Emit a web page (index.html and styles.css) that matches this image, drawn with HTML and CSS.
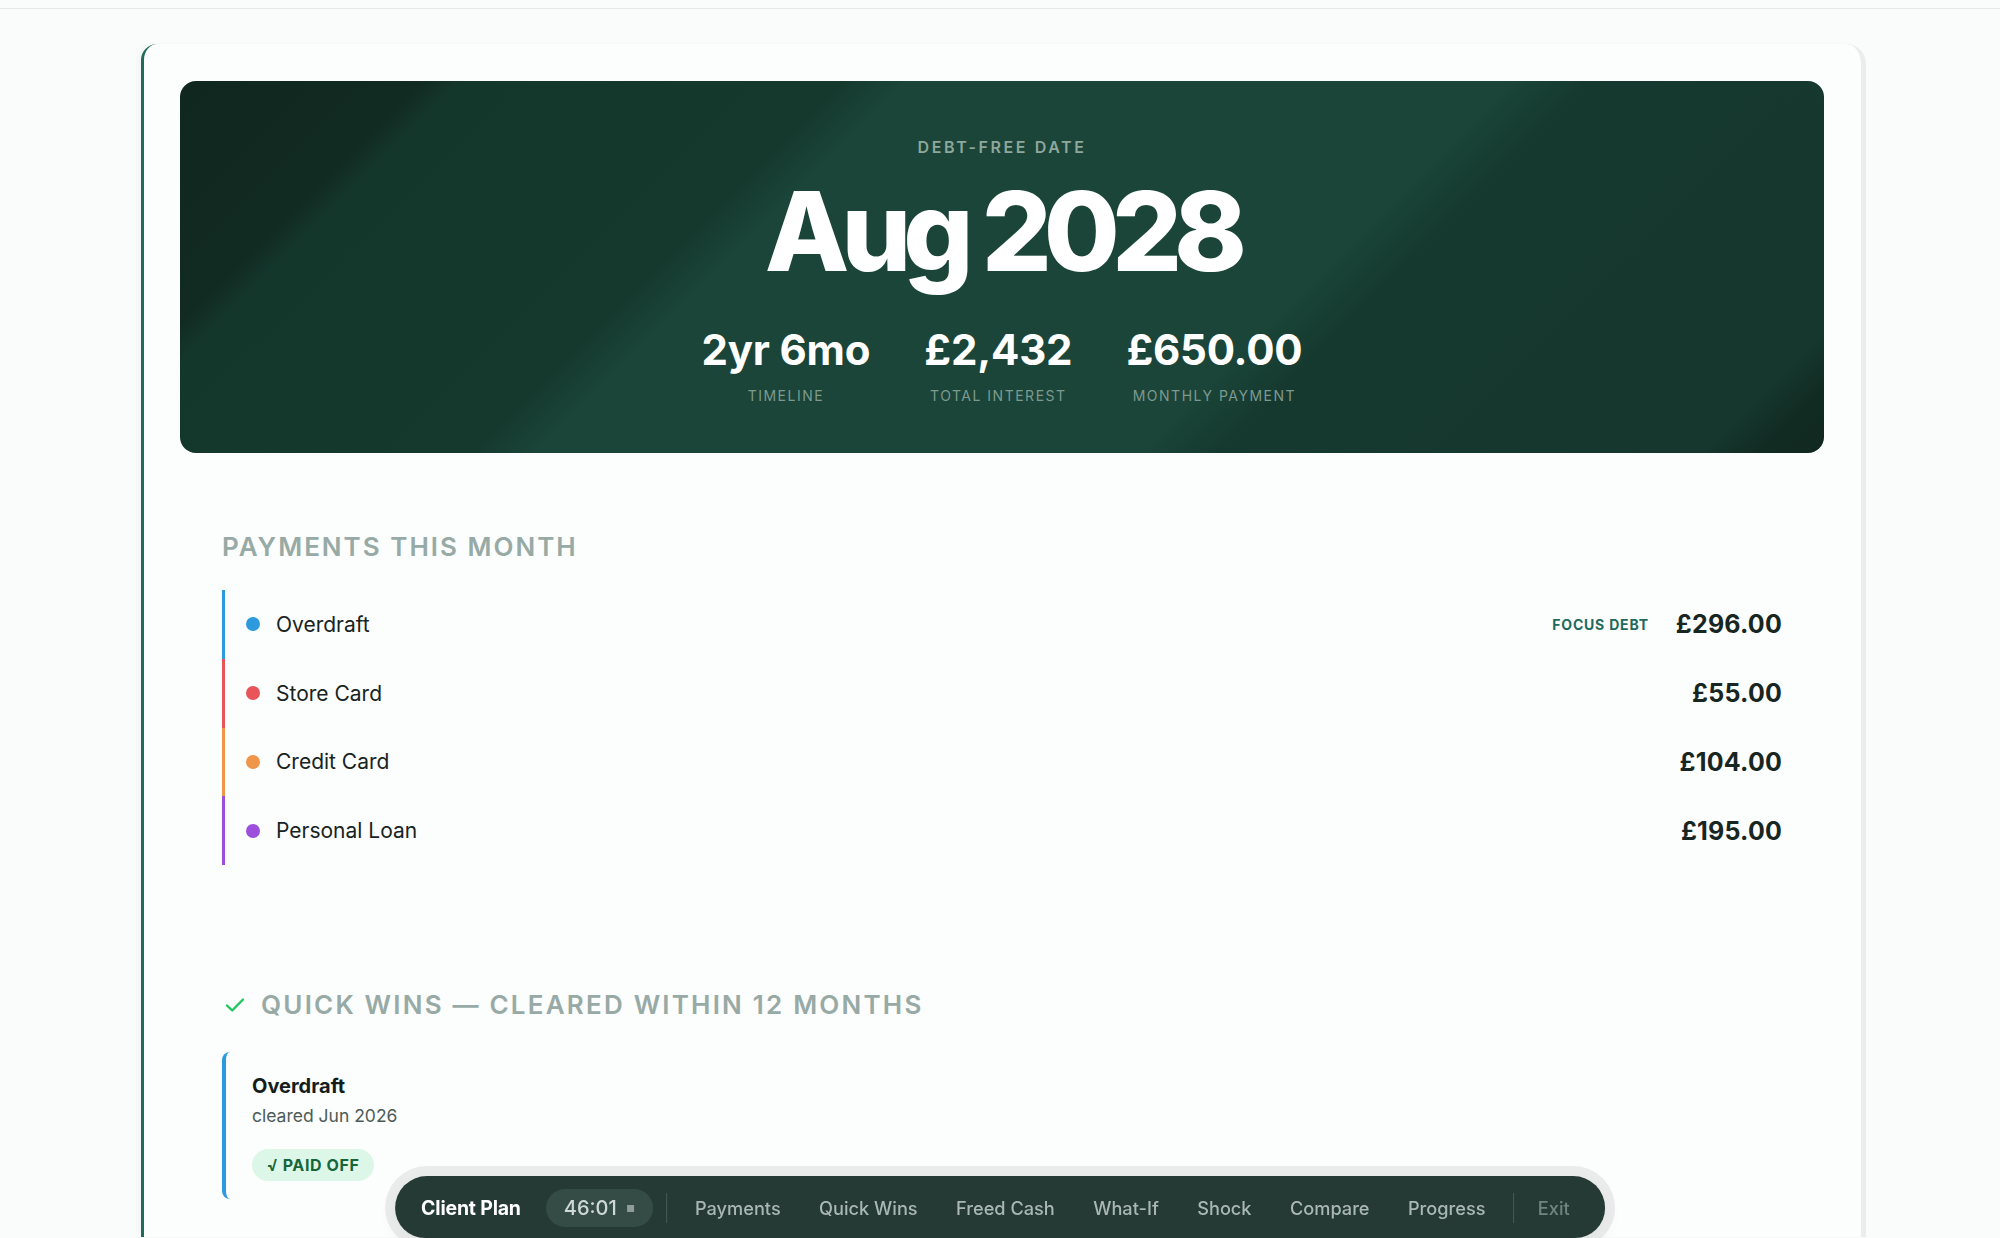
FILE: index.html
```html
<!DOCTYPE html>
<html lang="en">
<head>
<meta charset="utf-8">
<title>Client Plan</title>
<link rel="stylesheet" href="styles.css">
</head>
<body>
<div class="topbar"></div>
<main class="sheet">
  <section class="hero">
    <div class="hero-label">DEBT-FREE DATE</div>
    <div class="hero-date">Aug 2028</div>
    <div class="stats">
      <div class="stat"><div class="stat-value">2yr 6mo</div><div class="stat-label">TIMELINE</div></div>
      <div class="stat"><div class="stat-value">£2,432</div><div class="stat-label">TOTAL INTEREST</div></div>
      <div class="stat"><div class="stat-value">£650.00</div><div class="stat-label">MONTHLY PAYMENT</div></div>
    </div>
  </section>

  <section class="block payments">
    <h2 class="block-title">PAYMENTS THIS MONTH</h2>
    <div class="rows">
      <div class="row row-blue"><span class="dot dot-blue"></span><span class="row-name">Overdraft</span><span class="focus">FOCUS DEBT</span><span class="amount">£296.00</span></div>
      <div class="row row-red"><span class="dot dot-red"></span><span class="row-name">Store Card</span><span class="amount">£55.00</span></div>
      <div class="row row-orange"><span class="dot dot-orange"></span><span class="row-name">Credit Card</span><span class="amount">£104.00</span></div>
      <div class="row row-purple"><span class="dot dot-purple"></span><span class="row-name">Personal Loan</span><span class="amount">£195.00</span></div>
    </div>
  </section>

  <section class="block wins">
    <h2 class="block-title wins-title">
      <svg class="check" viewBox="0 0 20 16" width="20" height="16" aria-hidden="true"><path d="M2 8.5 L7.2 13.5 L18 2.5" fill="none" stroke="#22c55e" stroke-width="2.4" stroke-linecap="round" stroke-linejoin="round"/></svg>
      <span>QUICK WINS — CLEARED WITHIN 12 MONTHS</span>
    </h2>
    <div class="win-card">
      <div class="win-name">Overdraft</div>
      <div class="win-date">cleared Jun 2026</div>
      <span class="badge">√ PAID OFF</span>
    </div>
  </section>
</main>

<nav class="dock">
  <span class="dock-brand">Client Plan</span>
  <span class="timer">46:01 <span class="stop"></span></span>
  <span class="sep sep-left"></span>
  <a class="dock-link">Payments</a>
  <a class="dock-link">Quick Wins</a>
  <a class="dock-link">Freed Cash</a>
  <a class="dock-link">What-If</a>
  <a class="dock-link">Shock</a>
  <a class="dock-link">Compare</a>
  <a class="dock-link">Progress</a>
  <span class="sep sep-right"></span>
  <a class="dock-link exit">Exit</a>
</nav>
</body>
</html>
```

FILE: styles.css
```css
* { box-sizing: border-box; }
html, body { margin: 0; padding: 0; }
body {
  background: #fafbfb;
  font-family: Inter, "Noto Sans", "Liberation Sans", sans-serif;
  color: #17231f;
  height: 1238px;
  overflow: hidden;
}
.topbar {
  height: 9px;
  border-bottom: 1px solid #e6e9e8;
}
.sheet {
  margin: 35px 0 0 141px;
  width: 1725px;
  height: 1193px;
  background: #fcfdfd;
  border-left: 3px solid #1f6b5c;
  border-right: 5px solid #ebeded;
  border-radius: 16px 20px 0 0;
  padding: 37px 37px 0 36px;
  box-shadow: -4px 0 5px rgba(0,0,0,0.025);
  overflow: hidden;
}
.hero {
  height: 372px;
  border-radius: 16px;
  padding-top: 56px;
  background: linear-gradient(135deg, #10271f 0%, #112a22 12%, #14372c 14%, #16392e 33%, #1a4538 36%, #1a4538 66%, #16392f 70%, #15372d 94%, #112a22 97%, #102820 100%);
  text-align: center;
  color: #fff;
}
.hero-label {
  font-size: 16px;
  font-weight: 600;
  letter-spacing: 2.6px;
  color: #8fa79c;
  line-height: 18px;
  margin-top: 1px;
}
.hero-date {
  margin-top: 20px;
  font-size: 110px;
  line-height: 110px;
  font-weight: 800;
  letter-spacing: -8px;
}
.stats {
  margin-top: 41px;
  display: flex;
  justify-content: center;
  gap: 54px;
}
.stat { display: flex; flex-direction: column; align-items: center; }
.stat-value {
  font-size: 42px;
  line-height: 45px;
  font-weight: 700;
  letter-spacing: -0.2px;
}
.stat-label {
  margin-top: 15px;
  font-size: 14px;
  line-height: 17px;
  letter-spacing: 1.5px;
  color: #7e998f;
}

.block { margin: 0 42px; }
.payments { padding-top: 78px; }
.block-title {
  margin: 0 0 27px;
  font-size: 26px;
  line-height: 32px;
  font-weight: 600;
  letter-spacing: 2px;
  color: #97aaa5;
}
.rows { display: flex; flex-direction: column; }
.row {
  height: 68.75px;
  display: flex;
  align-items: center;
  border-left: 3px solid;
  padding-left: 21px;
}
.row-blue { border-color: #2d9ade; }
.row-red { border-color: #e8545a; }
.row-orange { border-color: #f0964a; }
.row-purple { border-color: #9b4fdc; }
.dot { width: 14px; height: 14px; border-radius: 50%; flex: none; }
.dot-blue { background: #2d9ade; }
.dot-red { background: #e8545a; }
.dot-orange { background: #f0964a; }
.dot-purple { background: #9b4fdc; }
.row-name {
  margin-left: 16px;
  font-size: 21px;
  color: #17231f;
  flex: 1;
}
.focus {
  font-size: 14px;
  font-weight: 700;
  letter-spacing: 0.8px;
  color: #1e6b5c;
  margin-right: 27px;
}
.amount {
  font-size: 25px;
  font-weight: 700;
  letter-spacing: 0.2px;
  color: #182622;
}

.wins { padding-top: 124px; }
.wins-title {
  display: flex;
  align-items: center;
  margin-bottom: 31px;
  margin-left: 3px;
  letter-spacing: 2.2px;
}
.check { margin-right: 16px; flex: none; }
.win-card {
  height: 147px;
  border-left: 4px solid #2d9ade;
  border-radius: 8px 0 0 8px;
  padding: 22px 24px 0 26px;
}
.win-name {
  font-size: 20px;
  line-height: 24px;
  font-weight: 700;
  color: #131d1a;
}
.win-date {
  margin-top: 7px;
  font-size: 17.5px;
  line-height: 22px;
  color: #4c5b57;
}
.badge {
  display: inline-block;
  margin-top: 22px;
  height: 32px;
  line-height: 32px;
  padding: 0 15px 0 15px;
  border-radius: 16px;
  background: #dcf7e7;
  color: #15663a;
  font-size: 16px;
  font-weight: 700;
  letter-spacing: 0.6px;
}

.dock {
  position: fixed;
  left: 50%;
  bottom: 0;
  transform: translateX(-50%);
  height: 62px;
  display: flex;
  align-items: center;
  padding: 2px 16px 0 26px;
  background: #263a35;
  border-radius: 32px 32px 30px 30px;
  box-shadow: 0 0 0 10px rgba(214,219,217,0.5), 0 6px 18px rgba(0,0,0,0.08);
  white-space: nowrap;
}
.dock-brand {
  font-size: 19.5px;
  font-weight: 700;
  color: #ffffff;
  letter-spacing: -0.2px;
  margin-right: 25px;
}
.timer {
  height: 38px;
  display: flex;
  align-items: center;
  gap: 10px;
  padding: 0 19px 0 18px;
  border-radius: 19px;
  background: #344b46;
  color: #cfd8d4;
  font-size: 20px;
  font-weight: 500;
  margin-right: 13px;
}
.stop { width: 7px; height: 7px; background: #8e9d98; display: inline-block; }
.sep { width: 1px; height: 30px; background: #455a55; }
.sep-left { margin-right: 9px; }
.sep-right { margin-left: 8px; margin-right: 5px; }
.dock-link {
  padding: 0 19.2px;
  font-size: 18.2px;
  font-weight: 500;
  color: #a9b8b2;
}
.dock-link.exit { color: #71857f; }
```
